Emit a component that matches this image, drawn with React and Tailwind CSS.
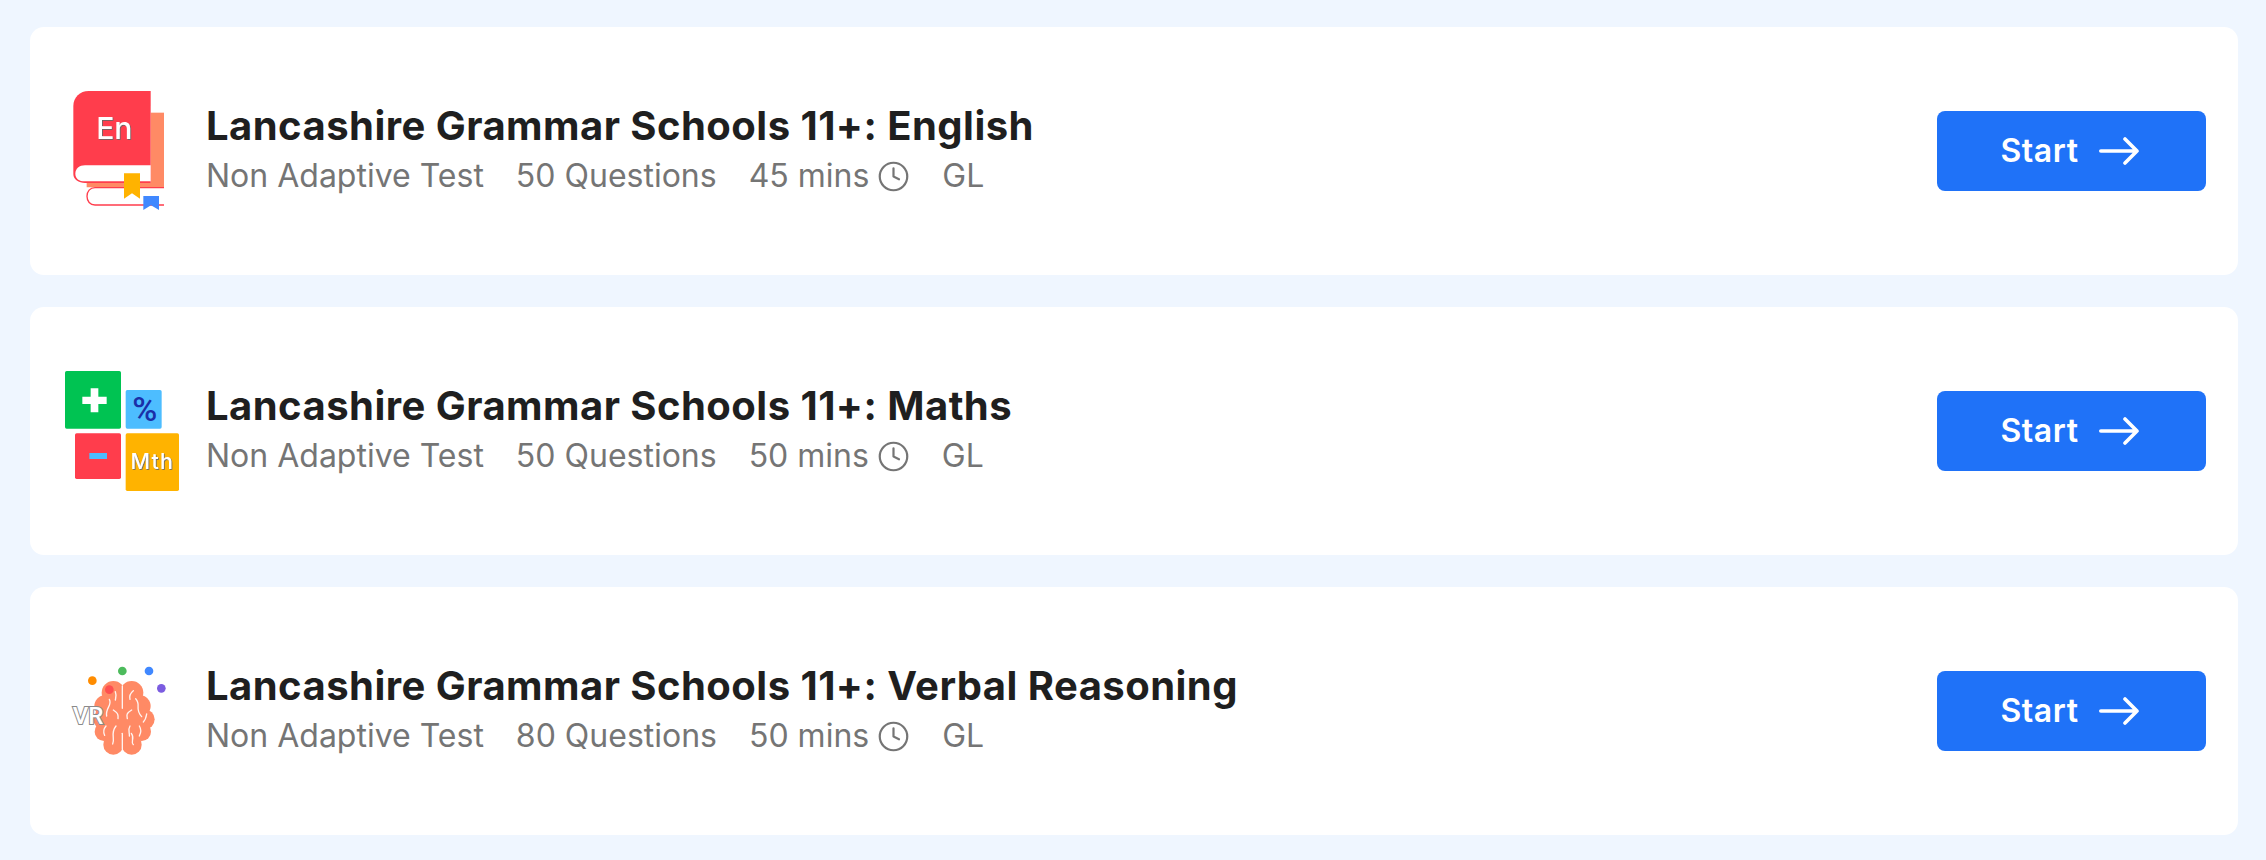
import { Clock } from "lucide-react";

// grey edge under the white letters in the icons
function TextShadow({ id }) {
    return (
        <filter id={id} x="-20%" y="-20%" width="140%" height="140%">
            <feDropShadow dx="2.5" dy="2.5" stdDeviation="0.6" floodColor="#666" />
        </filter>
    );
}

function BookIcon() {
    return (
        <svg viewBox="96 93 360 360" className="w-[120px] h-[120px] shrink-0">
            <TextShadow id="en-shadow" />
            <rect x="362" y="158" width="40" height="226" fill="#FF8A65" />
            <path d="M170 368H402V382H170Z" fill="#FF8A65" />
            <path d="M402 383H195C180 383 171 394 171 409C171 424 180 435 195 435H402" fill="#fff" stroke="#FF3D4C" strokeWidth="4" />
            <path d="M362 369H165C146 369 130 358 130 342V138C130 112 150 93 176 93H362Z" fill="#FF3D4C" />
            <path d="M165 316H362V364H165C147 364 136 356 136 341C136 326 148 316 165 316Z" fill="#fff" />
            <path d="M282 340H330V416L306 400L282 416Z" fill="#FFB300" />
            <path d="M340 408H387V450L363 436L340 450Z" fill="#4088FF" />
            <text x="253" y="238" textAnchor="middle" fontSize="90" fontWeight="500" fill="#fff" filter="url(#en-shadow)" className="font-['Inter',sans-serif]">En</text>
        </svg>
    );
}

function MathsIcon() {
    return (
        <svg viewBox="36 63 360 360" className="w-[120px] h-[120px] shrink-0">
            <TextShadow id="mth-shadow" />
            <rect x="45" y="63" width="168" height="173" rx="5" fill="#00C352" />
            <rect x="227" y="120" width="108" height="116" rx="5" fill="#4DBDFF" />
            <rect x="75" y="250" width="138" height="137" rx="5" fill="#FF3D4C" />
            <rect x="227" y="250" width="160" height="173" rx="5" fill="#FFB300" />
            <path d="M97 140H122V115H145V140H170V162H145V187H122V162H97Z" fill="#fff" />
            <rect x="118" y="309" width="53" height="18" fill="#4DBDFF" />
            <text x="284" y="212" textAnchor="middle" fontSize="102" fontWeight="500" fill="#1A2FA8" className="font-['Roboto',sans-serif]">%</text>
            <text x="307" y="358" textAnchor="middle" fontSize="64" fontWeight="500" letterSpacing="4" fill="#fff" filter="url(#mth-shadow)" className="font-['Inter',sans-serif]">Mth</text>
        </svg>
    );
}

function BrainIcon() {
    const lobes = [
        [190, 128, 35], [245, 128, 35], [165, 168, 32], [270, 168, 32],
        [160, 208, 30], [284, 208, 30], [162, 245, 28], [275, 245, 28],
        [190, 284, 30], [245, 284, 30], [217, 200, 75],
    ];
    const lines = [
        "M217 108V175", "M217 250V298", "M178 148C188 165 165 175 170 198", "M196 125C200 135 198 140 196 150",
        "M190 180C205 190 205 195 204 206", "M250 122C240 130 238 140 240 148", "M257 146C275 165 252 175 275 200",
        "M245 180C228 190 230 195 232 206", "M290 192C288 205 284 212 280 216", "M168 228C158 240 160 248 164 256",
        "M198 228C180 250 196 265 188 282", "M240 228C232 240 240 250 238 258", "M268 228C276 240 272 250 268 258",
        "M244 250C256 265 240 275 250 284",
    ];
    return (
        <svg viewBox="36 3 360 360" className="w-[120px] h-[120px] shrink-0">
            {lobes.map((c, i) => (
                <circle key={i} cx={c[0]} cy={c[1]} r={c[2]} fill="#FF8A65" />
            ))}
            {lines.map((d, i) => (
                <path key={i} d={d} fill="none" stroke="#fff" strokeWidth="4" strokeLinecap="round" opacity="0.9" />
            ))}
            <circle cx="127" cy="92" r="13" fill="#FF8C00" />
            <circle cx="217" cy="63" r="13" fill="#4CBB5C" />
            <circle cx="297" cy="63" r="13" fill="#4088FF" />
            <circle cx="334" cy="115" r="13" fill="#7B5CE0" />
            <circle cx="178" cy="119" r="13" fill="#FF5050" />
            <text x="114" y="222" textAnchor="middle" fontSize="72" fontWeight="500" fill="#fff" stroke="#8a8a8a" strokeWidth="6" paintOrder="stroke" className="font-['Roboto',sans-serif]">VR</text>
        </svg>
    );
}

function TestCard({ icon, title, questions, mins }) {
    return (
        <div className="h-[248px] bg-white rounded-[14px] pl-8 pr-8 flex items-center">
            {icon}
            <div className="ml-6 flex-1 min-w-0 pb-[5px]">
                <h2 className="text-[40px] leading-[50px] mb-[5px] font-bold tracking-[0.46px] text-[#1f1f1f] font-['Inter',sans-serif]">{title}</h2>
                <div className="flex items-center gap-[32px] text-[32px] leading-[40px] text-[#757575] font-['Inter',sans-serif]">
                    <span>Non Adaptive Test</span>
                    <span>{questions} Questions</span>
                    <span className="flex items-center gap-[8px]">
                        {mins} mins
                        <Clock size={33} strokeWidth={1.6} />
                    </span>
                    <span>GL</span>
                </div>
            </div>
            <button className="w-[269px] h-[80px] pr-[4px] bg-[#1f72f8] rounded-lg flex items-center justify-center gap-[20px] text-white text-[32px] tracking-[0.6px] font-semibold font-['Inter',sans-serif]">
                Start
                <svg viewBox="0 0 40 28" className="w-[40px] h-[28px]" fill="none" stroke="#fff" strokeWidth="3.6" strokeLinecap="round" strokeLinejoin="round">
                    <path d="M1.8 14H38M26 2L38 14L26 26" />
                </svg>
            </button>
        </div>
    );
}

export default function App() {
    return (
        <div className="min-h-screen bg-[#eff6ff] pt-[27px] pb-[25px] pl-[30px] pr-[28px] flex flex-col gap-8">
            <TestCard icon={<BookIcon />} title="Lancashire Grammar Schools 11+: English" questions="50" mins="45" />
            <TestCard icon={<MathsIcon />} title="Lancashire Grammar Schools 11+: Maths" questions="50" mins="50" />
            <TestCard icon={<BrainIcon />} title="Lancashire Grammar Schools 11+: Verbal Reasoning" questions="80" mins="50" />
        </div>
    );
}
